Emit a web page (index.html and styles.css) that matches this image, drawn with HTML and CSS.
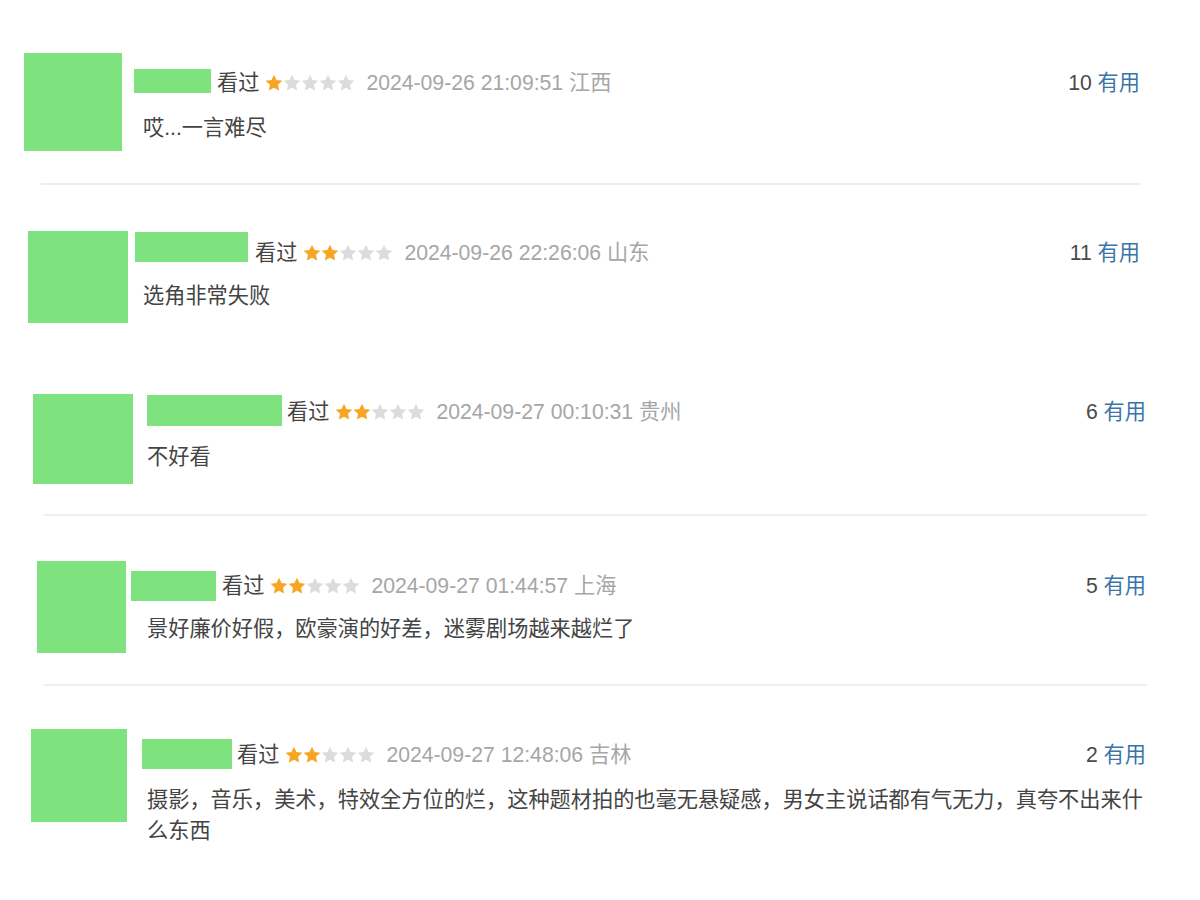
FILE: index.html
```html
<!DOCTYPE html>
<html lang="zh-CN">
<head>
<meta charset="utf-8">
<title>短评</title>
<link rel="stylesheet" href="styles.css">
</head>
<body>
<svg class="defs" width="0" height="0" aria-hidden="true">
  <symbol id="star" viewBox="0 0 18 18">
    <polygon points="9,0.7 11.47,6.1 17.37,6.78 12.99,10.8 14.17,16.62 9,13.7 3.83,16.62 5.01,10.8 0.63,6.78 6.53,6.1"/>
  </symbol>
</svg>
<div class="list">
  <div class="review r1">
    <div class="avatar"></div>
    <div class="body">
      <div class="head">
        <span class="name"></span>
        <span class="watched">看过</span>
        <span class="stars">
          <svg class="on"><use href="#star"/></svg><svg><use href="#star"/></svg><svg><use href="#star"/></svg><svg><use href="#star"/></svg><svg><use href="#star"/></svg>
        </span>
        <span class="time">2024-09-26 21:09:51 江西</span>
        <span class="votes"><span class="count">10</span> <a class="useful">有用</a></span>
      </div>
      <p class="comment">哎...一言难尽</p>
    </div>
  </div>
  <div class="sep s1"></div>

  <div class="review r2">
    <div class="avatar"></div>
    <div class="body">
      <div class="head">
        <span class="name"></span>
        <span class="watched">看过</span>
        <span class="stars">
          <svg class="on"><use href="#star"/></svg><svg class="on"><use href="#star"/></svg><svg><use href="#star"/></svg><svg><use href="#star"/></svg><svg><use href="#star"/></svg>
        </span>
        <span class="time">2024-09-26 22:26:06 山东</span>
        <span class="votes"><span class="count">11</span> <a class="useful">有用</a></span>
      </div>
      <p class="comment">选角非常失败</p>
    </div>
  </div>

  <div class="review r3">
    <div class="avatar"></div>
    <div class="body">
      <div class="head">
        <span class="name"></span>
        <span class="watched">看过</span>
        <span class="stars">
          <svg class="on"><use href="#star"/></svg><svg class="on"><use href="#star"/></svg><svg><use href="#star"/></svg><svg><use href="#star"/></svg><svg><use href="#star"/></svg>
        </span>
        <span class="time">2024-09-27 00:10:31 贵州</span>
        <span class="votes"><span class="count">6</span> <a class="useful">有用</a></span>
      </div>
      <p class="comment">不好看</p>
    </div>
  </div>
  <div class="sep s3"></div>

  <div class="review r4">
    <div class="avatar"></div>
    <div class="body">
      <div class="head">
        <span class="name"></span>
        <span class="watched">看过</span>
        <span class="stars">
          <svg class="on"><use href="#star"/></svg><svg class="on"><use href="#star"/></svg><svg><use href="#star"/></svg><svg><use href="#star"/></svg><svg><use href="#star"/></svg>
        </span>
        <span class="time">2024-09-27 01:44:57 上海</span>
        <span class="votes"><span class="count">5</span> <a class="useful">有用</a></span>
      </div>
      <p class="comment">景好廉价好假，欧豪演的好差，迷雾剧场越来越烂了</p>
    </div>
  </div>
  <div class="sep s4"></div>

  <div class="review r5">
    <div class="avatar"></div>
    <div class="body">
      <div class="head">
        <span class="name"></span>
        <span class="watched">看过</span>
        <span class="stars">
          <svg class="on"><use href="#star"/></svg><svg class="on"><use href="#star"/></svg><svg><use href="#star"/></svg><svg><use href="#star"/></svg><svg><use href="#star"/></svg>
        </span>
        <span class="time">2024-09-27 12:48:06 吉林</span>
        <span class="votes"><span class="count">2</span> <a class="useful">有用</a></span>
      </div>
      <p class="comment">摄影，音乐，美术，特效全方位的烂，这种题材拍的也毫无悬疑感，男女主说话都有气无力，真夸不出来什么东西</p>
    </div>
  </div>
</div>
</body>
</html>
```

FILE: styles.css
```css
html, body {
  margin: 0;
  padding: 0;
  background: #fff;
}

body {
  font-family: "Liberation Sans", "Noto Sans CJK SC", sans-serif;
  font-size: 21.2px;
  color: #494949;
  width: 1200px;
  height: 900px;
  overflow: hidden;
}

.defs {
  position: absolute;
  width: 0;
  height: 0;
}

.review {
  display: flex;
  align-items: flex-start;
  box-sizing: border-box;
  height: var(--h);
  padding-left: var(--ax);
  padding-top: var(--ay);
  padding-right: var(--pr);
}

.avatar {
  flex: none;
  width: var(--aw);
  height: var(--ah);
  background: #7ee27e;
}

.body {
  flex: 1;
  min-width: 0;
  padding-top: var(--by);
}

.head {
  display: flex;
  align-items: flex-start;
  height: 30px;
  line-height: 30px;
  margin-left: var(--nl);
  white-space: nowrap;
}

.name {
  flex: none;
  width: var(--nw);
  height: var(--nh);
  margin-top: var(--nt);
  margin-right: var(--ng);
  background: #7ee27e;
}

.watched {
  color: #444;
}

.stars {
  display: flex;
  align-items: center;
  height: 30px;
  margin-left: 6px;
  margin-right: 11px;
}

.stars svg {
  width: 18px;
  height: 18px;
  fill: #dcdcdc;
  display: block;
}

.stars svg.on {
  fill: #f6a623;
}

.time {
  color: #a6a6a6;
}

.votes {
  margin-left: auto;
}

.count {
  color: #4a4a4a;
}

.useful {
  color: #3a74a8;
  text-decoration: none;
}

.comment {
  margin: var(--ct) 0 0 var(--cl);
  line-height: 31px;
  color: #444;
}

.sep {
  height: 2px;
  background: #eeeeee;
}

.s1 { margin-left: 41px; width: 1100px; }
.s3 { margin-left: 44px; width: 1103px; }
.s4 { margin-left: 44px; width: 1103px; }

.r1 {
  --h: 183px; --ax: 24px; --ay: 53px; --aw: 98px; --ah: 98px; --pr: 60px;
  --by: 15px; --nl: 12px; --nw: 77px; --nh: 24px; --nt: 1px; --ng: 6px;
  --ct: 14px; --cl: 21px;
}
.r2 {
  --h: 164px; --ax: 28px; --ay: 46px; --aw: 100px; --ah: 92px; --pr: 60px;
  --by: 7px; --nl: 7px; --nw: 113px; --nh: 30px; --nt: -6px; --ng: 7px;
  --ct: 12px; --cl: 15px;
}
.r3 {
  --h: 165px; --ax: 33px; --ay: 45px; --aw: 100px; --ah: 90px; --pr: 54px;
  --by: 3px; --nl: 14px; --nw: 135px; --nh: 31px; --nt: -2px; --ng: 5px;
  --ct: 14px; --cl: 14px;
}
.r4 {
  --h: 168px; --ax: 37px; --ay: 45px; --aw: 89px; --ah: 92px; --pr: 54px;
  --by: 10px; --nl: 5px; --nw: 85px; --nh: 30px; --nt: 0px; --ng: 6px;
  --ct: 12px; --cl: 21px;
}
.r5 {
  --h: 214px; --ax: 31px; --ay: 43px; --aw: 96px; --ah: 93px; --pr: 54px;
  --by: 11px; --nl: 15px; --nw: 90px; --nh: 30px; --nt: -1px; --ng: 5px;
  --ct: 14px; --cl: 20px;
}
```
